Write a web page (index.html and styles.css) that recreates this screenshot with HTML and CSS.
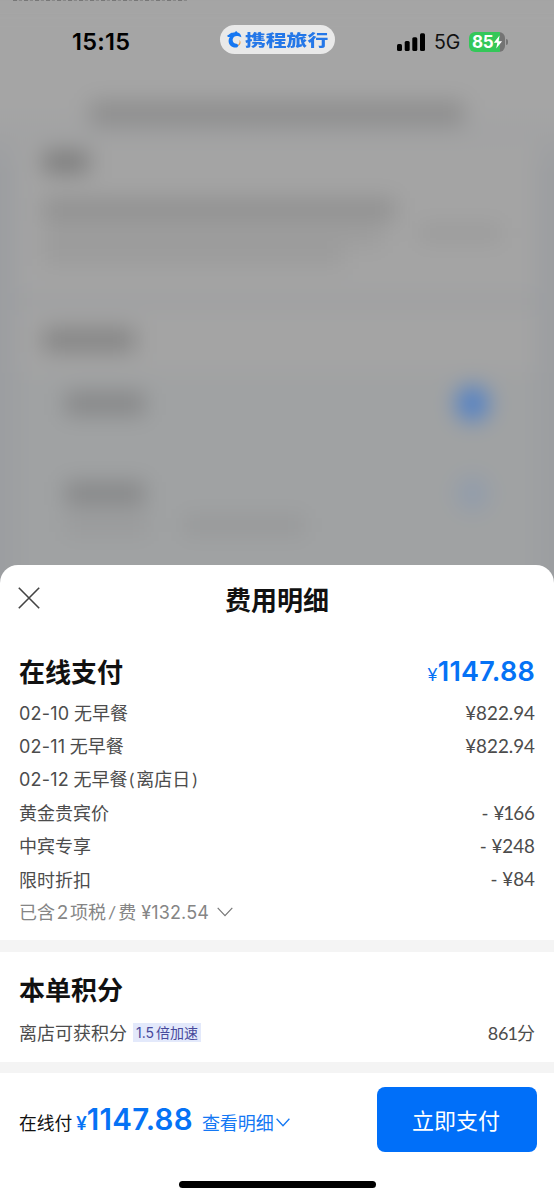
FILE: index.html
```html
<!DOCTYPE html>
<html lang="zh-CN">
<head>
<meta charset="utf-8">
<title>费用明细</title>
<link rel="stylesheet" href="styles.css">
</head>
<body>
<div class="screen">
  <div class="backdrop">
    <div class="nav-strip"><i class="smudge smudge-nav"></i></div>
    <div class="card card-room">
      <i class="smudge s-title"></i>
      <i class="smudge s-line"></i>
      <div class="s-row"><i class="smudge s-faint"></i><i class="smudge s-link"></i></div>
      <i class="smudge s-faint-short"></i>
    </div>
    <div class="card card-pay">
      <i class="smudge s-head"></i>
      <div class="option"><i class="smudge s-opt"></i><i class="dot dot-on"></i></div>
      <div class="option option-two"><i class="smudge s-opt"></i><i class="dot"></i></div>
      <div class="s-row s-note"><i class="smudge s-note-a"></i><i class="smudge s-note-b"></i></div>
    </div>
  </div>

  <div class="top">
    <div class="clipped"></div>
    <div class="status">
      <span class="time">15:15</span>
      <div class="brand">
        <svg class="dolphin" width="16" height="17" viewBox="0 0 16 17">
          <path d="M.3 4.300C2 4.200 2.600 2.900 3.900 2.100 5 1.400 6.400 1.500 7.400 1.400L9.200.1 10.600 1.500C12.700 1.900 14 3.600 14.400 6.300L11.800 5.300C9 4.300 6.200 5.400 5.700 8.300c-.4 2.800 1.300 4.500 3.900 4.500l2.200 1.500-1.500 1.900C5.900 17.300 1.700 14.600 1.600 10.200c0-1.600.4-2.800 1.300-4.300L.7 5.900z" fill="#1677f2"/>
          <path d="M12.500 8.700c1.700 2.100 1.400 4.700-.8 6l-.6-1.200c1.400-1 1.800-2.700 1.400-4.800z" fill="#ee9e43"/>
        </svg>
        <span class="brand-name">携程旅行</span>
      </div>
      <div class="indicators">
        <svg class="signal" width="28" height="18" viewBox="0 0 28 18">
          <rect x="0" y="11" width="5" height="7" rx="1.500"/>
          <rect x="7.700" y="8" width="5" height="10" rx="1.500"/>
          <rect x="15.300" y="4.200" width="5" height="13.800" rx="1.500"/>
          <rect x="23" y="0.300" width="5" height="17.700" rx="1.500"/>
        </svg>
        <span class="net">5G</span>
        <div class="battery"><span>85</span><svg width="10" height="14" viewBox="0 0 10 14"><path d="M6.500.5L.8 7.800h3.500L3.200 13.500l5.900-7.300H5.600z" fill="#fff"/></svg></div>
        <i class="nub"></i>
      </div>
    </div>
  </div>

  <main class="sheet">
    <header class="sheet-head">
      <svg class="close" width="22" height="22" viewBox="0 0 22 22"><path d="M.8.800l20.400 20.400M21.200.800L.8 21.200" stroke="#444" stroke-width="1.600" fill="none"/></svg>
      <h1>费用明细</h1>
    </header>
    <section class="fees">
      <div class="fee-head"><h2>在线支付</h2><div class="total"><small>¥</small><b>1147.88</b></div></div>
      <div class="row"><span><em class="date">02-10</em> 无早餐</span><span class="amount">¥822.94</span></div>
      <div class="row"><span><em class="date">02-11</em> 无早餐</span><span class="amount">¥822.94</span></div>
      <div class="row"><span><em class="date">02-12</em> 无早餐<em class="paren">(</em>离店日<em class="paren">)</em></span></div>
      <div class="row"><span>黄金贵宾价</span><span class="amount">- ¥<i class="thin-one">1</i>66</span></div>
      <div class="row"><span>中宾专享</span><span class="amount">- ¥248</span></div>
      <div class="row"><span>限时折扣</span><span class="amount">- ¥84</span></div>
      <div class="row tax"><span>已含<em class="two">2</em>项税<em class="slash">/</em>费<em class="tax-sum">¥132.54</em></span><svg width="16" height="10" viewBox="0 0 16 10"><path d="M.7.9L8 8.600 15.300.9" fill="none" stroke="#777" stroke-width="1.200"/></svg></div>
    </section>
    <section class="points">
      <h2>本单积分</h2>
      <div class="row"><span>离店可获积分</span><span class="tag"><em>1.5</em>倍加速</span><span class="amount score">86<i class="thin-one">1</i>分</span></div>
    </section>
    <footer class="pay">
      <span class="pay-label">在线付</span>
      <div class="total pay-total"><small>¥</small><b>1147.88</b></div>
      <span class="detail">查看明细</span>
      <svg class="detail-arrow" width="14" height="9" viewBox="0 0 14 9"><path d="M.6.700L7 7.800 13.400.7" fill="none" stroke="#1478f4" stroke-width="1.300"/></svg>
      <button class="pay-button">立即支付</button>
    </footer>
    <div class="home"></div>
  </main>
</div>
</body>
</html>
```
FILE: styles.css
```css
* { box-sizing: border-box; }
body { margin: 0; }
h1, h2 { margin: 0; font-weight: 700; }
i, em { font-style: normal; }
svg { display: block; flex: none; }

.screen {
  position: relative;
  width: 554px;
  height: 1200px;
  overflow: hidden;
  display: flex;
  flex-direction: column;
  background: #a5a5a5;
  font-family: "Lato", "Noto Sans CJK SC", sans-serif;
}

/* dimmed, blurred page behind the sheet */
.backdrop {
  position: absolute;
  inset: 0 -30px auto;
  height: 640px;
  padding: 0 30px;
  background: linear-gradient(#a5a5a5 110px, #9c9ea1 170px);
  filter: blur(11px);
}
.nav-strip { height: 140px; padding: 101px 90px 0; }
.smudge { display: block; flex: none; background: #8e8e8e; }
.smudge-nav { width: 374px; height: 25px; background: #8e8e8e; }
.card { margin: 0 17px; background: #a4a4a4; }
.card-room { height: 157px; padding: 11px 26px 0; }
.s-title { width: 46px; height: 22px; background: #7c7c7c; }
.s-line { width: 352px; height: 23px; margin-top: 25px; background: #919191; }
.s-row { display: flex; }
.s-faint { width: 340px; height: 20px; background: #9c9c9c; margin-top: 5px; }
.s-link { width: 82px; height: 16px; margin: 4px 0 0 36px; background: #9a9a9a; }
.s-faint-short { width: 300px; height: 20px; background: #9c9c9c; }
.card-pay { height: 340px; margin-top: 9px; padding: 22px 26px 0; background: linear-gradient(#a4a4a4 66px, #a0a2a3 67px); }
.s-head { width: 92px; height: 24px; background: #858585; }
.option { display: flex; justify-content: space-between; align-items: center; height: 40px; margin-top: 31px; padding: 0 22px; }
.option-two { margin-top: 50px; }
.s-opt { width: 80px; height: 23px; background: #868788; }
.dot { width: 33px; height: 35px; border-radius: 50%; background: #919cab; }
.dot-on { background: #5080c6; }
.s-note { margin: 3px 22px; gap: 34px; }
.s-note-a { width: 84px; height: 18px; background: #999a9b; }
.s-note-b { width: 122px; height: 18px; background: #979899; }

.top { position: relative; height: 565px; }
.clipped { height: 1px; width: 176px; margin-left: 13px; background: repeating-linear-gradient(90deg, #777 0 4px, #a0a0a0 4px 6px, #888 6px 9px, #a5a5a5 9px 11px); }
.status { display: flex; align-items: center; height: 57px; padding: 24px 46px 0 72px; }
.time { width: 148px; font: 600 23.500px/30px "Inter", sans-serif; letter-spacing: .3px; color: #000; }
.brand { display: flex; align-items: center; width: 115px; height: 29px; margin-top: -4px; padding-left: 7px; border-radius: 15px; background: #e9e9e9; }
.brand-name { margin: -2px 0 0 2px; font: 900 16px/24px "Noto Sans CJK SC", sans-serif; color: #2477e8; transform: scaleX(1.3); transform-origin: left; white-space: nowrap; }
.indicators { display: flex; align-items: center; margin-left: 62px; }
.net { width: 27px; margin-left: 9px; font: 400 19.500px/24px "Inter", sans-serif; letter-spacing: -.2px; color: #111; }
.battery { display: flex; align-items: center; width: 36px; height: 20px; margin-left: 8px; padding-left: 3px; border-radius: 6px; background: linear-gradient(90deg, #34c759 31px, #747474 31px); color: #fff; font: 700 17px/20px "Inter", sans-serif; letter-spacing: -.3px; }
.nub { width: 2px; height: 6px; margin-left: 1px; border-radius: 0 2px 2px 0; background: #747474; }

.sheet { position: relative; display: flex; flex-direction: column; height: 635px; border-radius: 18px 18px 0 0; background: #fff; color: #111; }
.sheet-head { display: grid; grid-template-columns: 50px 1fr 50px; align-items: center; height: 69px; padding: 0 18px; }
.sheet-head h1 { font-size: 26px; line-height: 36px; text-align: center; }
.sheet-head .close { margin-top: -3px; }
.fees { height: 318px; padding: 20px 19px 0; border-bottom: 12px solid #f4f4f4; }
h2 { font-size: 26px; line-height: 36px; }
.fee-head { display: flex; justify-content: space-between; align-items: center; height: 36px; margin-bottom: 6px; }
.total { display: flex; align-items: baseline; padding-top: 2px; color: #0572f5; line-height: 36px; font-size: 27px; }
.total small { font-size: 18px; }
.total b { font-family: "Inter", sans-serif; font-weight: 600; letter-spacing: .25px; }
.row { display: flex; align-items: center; height: 33.300px; font-size: 18px; line-height: 26px; color: #4c4c4c; white-space: nowrap; }
.row > span:first-child { padding-top: 1px; }
.amount { margin-left: auto; font-size: 18.800px; }
.thin-one { margin: 0 -1px; }
.date { font-family: "Inter", sans-serif; font-size: 18px; letter-spacing: .2px; }
.tax { color: #858585; }
.tax svg { margin-left: 8px; }
.two { margin: 0 2px; font-size: 19px; }
.slash { margin: 0 2px; }
.paren { margin: 0 2px; }
.tax-sum { margin-left: 5px; font-family: "Inter", sans-serif; letter-spacing: .15px; }
.points { height: 121px; padding: 20px 19px 0; border-bottom: 11px solid #f4f4f4; }
.points .row { margin-top: 8px; }
.score { font-size: 18px; }
.tag { height: 19px; margin-left: 6px; padding: 0 3px; font-size: 14px; line-height: 19px; background: #e3e9fb; color: #484a9c; }
.tag em { margin-right: 2px; font-family: "Inter", sans-serif; }
.pay { display: flex; align-items: center; height: 93px; padding: 0 17px 0 19px; }
.pay-label { font-size: 17.800px; line-height: 26px; margin-top: 6px; }
.pay-total { margin-left: 4px; font-size: 29.500px; }
.pay-total small { font-weight: 700; }
.pay-total b { letter-spacing: .25px; }
.detail { margin: 6px 0 0 9px; font-size: 18px; line-height: 26px; color: #1478f4; }
.detail-arrow { margin: 6px 0 0 2px; }
.pay-button { width: 160px; height: 65px; margin-left: auto; padding: 0 2px 2px 0; border: 0; border-radius: 8px; background: #006ff9; color: #fff; font: 400 22px/32px "Noto Sans CJK SC", sans-serif; }
.home { width: 197px; height: 7px; margin: 15px 0 0 179px; border-radius: 4px; background: #000; }
```
